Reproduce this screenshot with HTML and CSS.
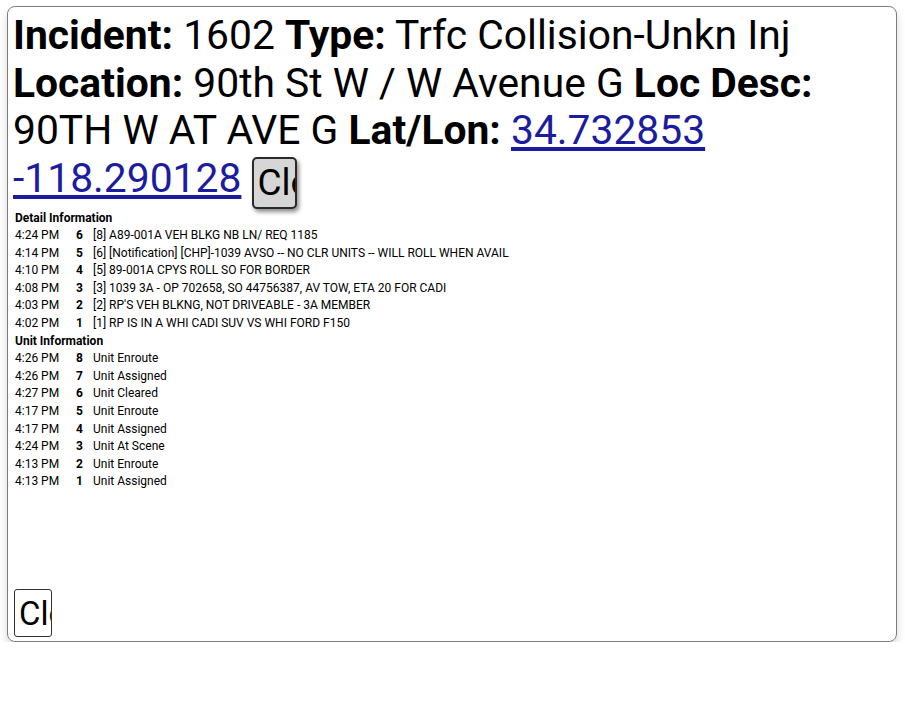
FILE: index.html
```html
<!DOCTYPE html>
<html lang="en">
<head>
<meta charset="utf-8">
<title>Incident 1602</title>
<link rel="stylesheet" href="styles.css">
</head>
<body>
<div class="panel">
  <p class="summary"><b>Incident:</b> 1602 <b>Type:</b> Trfc Collision-Unkn Inj <b>Location:</b> 90th St W / W Avenue G <b>Loc Desc:</b> 90TH W AT AVE G <b>Lat/Lon:</b> <a href="#" class="coord">34.732853 -118.290128</a> <button class="btn-top" type="button">Close</button></p>
  <table class="log">
    <tr><th colspan="3">Detail Information</th></tr>
    <tr><td class="t">4:24 PM</td><td class="n">6</td><td>[8] A89-001A VEH BLKG NB LN/ REQ 1185</td></tr>
    <tr><td class="t">4:14 PM</td><td class="n">5</td><td>[6] [Notification] [CHP]-1039 AVSO -- NO CLR UNITS -- WILL ROLL WHEN AVAIL</td></tr>
    <tr><td class="t">4:10 PM</td><td class="n">4</td><td>[5] 89-001A CPYS ROLL SO FOR BORDER</td></tr>
    <tr><td class="t">4:08 PM</td><td class="n">3</td><td>[3] 1039 3A - OP 702658, SO 44756387, AV TOW, ETA 20 FOR CADI</td></tr>
    <tr><td class="t">4:03 PM</td><td class="n">2</td><td>[2] RP'S VEH BLKNG, NOT DRIVEABLE - 3A MEMBER</td></tr>
    <tr><td class="t">4:02 PM</td><td class="n">1</td><td>[1] RP IS IN A WHI CADI SUV VS WHI FORD F150</td></tr>
    <tr><th colspan="3">Unit Information</th></tr>
    <tr><td class="t">4:26 PM</td><td class="n">8</td><td>Unit Enroute</td></tr>
    <tr><td class="t">4:26 PM</td><td class="n">7</td><td>Unit Assigned</td></tr>
    <tr><td class="t">4:27 PM</td><td class="n">6</td><td>Unit Cleared</td></tr>
    <tr><td class="t">4:17 PM</td><td class="n">5</td><td>Unit Enroute</td></tr>
    <tr><td class="t">4:17 PM</td><td class="n">4</td><td>Unit Assigned</td></tr>
    <tr><td class="t">4:24 PM</td><td class="n">3</td><td>Unit At Scene</td></tr>
    <tr><td class="t">4:13 PM</td><td class="n">2</td><td>Unit Enroute</td></tr>
    <tr><td class="t">4:13 PM</td><td class="n">1</td><td>Unit Assigned</td></tr>
  </table>
  <div class="footer"><button class="btn-bottom" type="button">Close</button></div>
</div>
</body>
</html>
```

FILE: styles.css
```css
html, body {
  margin: 0;
  padding: 0;
  background: #ffffff;
}

body {
  font-family: Roboto, "Liberation Sans", Arial, sans-serif;
  color: #000000;
}

.panel {
  box-sizing: border-box;
  margin: 6px 8px 0 7px;
  height: 636px;
  padding: 5px 4px 4px 5px;
  border: 1px solid #7d7d7d;
  border-radius: 8px;
  box-shadow: 0 5px 8px rgba(0, 0, 0, 0.16);
  display: flex;
  flex-direction: column;
}

.summary {
  margin: 0;
  font-size: 40.8px;
  line-height: 47.5px;
}

.summary b {
  font-weight: 700;
}

.coord {
  color: #1c1ca0;
  text-decoration: underline;
}

.btn-top {
  box-sizing: border-box;
  width: 45px;
  height: 52px;
  padding: 0 0 0 4px;
  overflow: hidden;
  white-space: nowrap;
  text-align: left;
  font: inherit;
  font-size: 37px;
  line-height: 48px;
  color: #000;
  background: #d6d6d6;
  border: 2px solid #2a2a2a;
  border-radius: 5px;
  box-shadow: 2px 3px 4px rgba(0, 0, 0, 0.45);
  vertical-align: -3px;
}

.log {
  margin-top: 0;
  margin-left: -1px;
  border-spacing: 2px;
  font-size: 12px;
  line-height: 13.6px;
}

.log th {
  text-align: left;
  font-weight: 700;
  padding: 1px;
}

.log td {
  padding: 1px;
  white-space: nowrap;
}

.log td.t {
  width: 57px;
}

.log td.n {
  width: 13px;
  font-weight: 700;
}

.footer {
  margin-top: auto;
  padding-left: 1px;
}

.btn-bottom {
  box-sizing: border-box;
  width: 38px;
  height: 48px;
  padding: 0 0 0 4px;
  overflow: hidden;
  white-space: nowrap;
  text-align: left;
  font-family: inherit;
  font-size: 33px;
  color: #000;
  background: #ffffff;
  border: 1px solid #333333;
  border-radius: 3px;
}
```
